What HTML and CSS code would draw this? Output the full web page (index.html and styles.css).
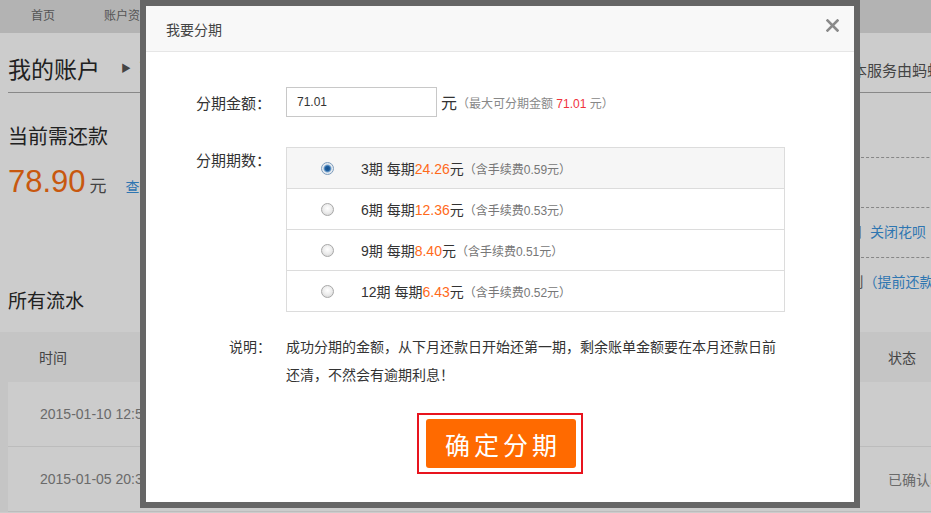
FILE: index.html
```html
<!DOCTYPE html>
<html lang="zh">
<head>
    <meta charset="UTF-8">
    <meta name="viewport" content="width=device-width, initial-scale=1.0">
    <title>我的账户 - 花呗</title>
    <link rel="stylesheet" href="styles.css">
</head>
<body>
    <nav class="top-nav">
        <a href="#">首页</a>
        <a href="#">账户资产</a>
        <a href="#">我的花呗</a>
        <a href="#">交易记录</a>
    </nav>

    <div class="page">
        <div class="crumb-bar">
            <div class="crumb">
                <h2>我的账户</h2>
                <span class="crumb-arrow">▶</span>
                <span class="crumb-sub">花呗</span>
            </div>
            <div class="crumb-note">本服务由蚂蚁微贷提供</div>
        </div>

        <div class="overview">
            <div class="summary">
                <h3>当前需还款</h3>
                <div class="due">
                    <span class="due-num">78.90</span>
                    <span class="due-unit">元</span>
                    <a href="#" class="link">查看账单</a>
                </div>
                <h3 class="records-title">所有流水</h3>
            </div>
            <ul class="side-info">
                <li>花呗额度：2000.00元</li>
                <li>每月10日为还款日</li>
                <li>查看花呗服务合同与小贷公司<a href="#" class="link gap">关闭花呗</a></li>
                <li>每月10日还款，详见还款规则<a href="#" class="link">（提前还款）</a></li>
            </ul>
        </div>

        <div class="records">
            <table>
                <colgroup>
                    <col style="width:260px">
                    <col style="width:320px">
                    <col style="width:150px">
                    <col style="width:142px">
                    <col style="width:160px">
                </colgroup>
                <thead>
                    <tr><th>时间</th><th>名称</th><th>金额</th><th>类型</th><th class="status">状态</th></tr>
                </thead>
                <tbody>
                    <tr><td>2015-01-10 12:56</td><td>花呗还款</td><td>-78.90</td><td>还款</td><td class="status"></td></tr>
                    <tr><td>2015-01-05 20:31</td><td>天猫超市购物</td><td>71.01</td><td>消费</td><td class="status">已确认收货</td></tr>
                </tbody>
            </table>
        </div>
    </div>

    <div class="modal-mask"></div>

    <div class="dialog">
        <div class="dialog-head">
            <span class="dialog-title">我要分期</span>
            <a href="#" class="dialog-close">
                <svg width="13" height="13" viewBox="0 0 13 13">
                    <path d="M1.5 1.5 L11.5 11.5 M11.5 1.5 L1.5 11.5" stroke="#8a8a8a" stroke-width="2.6" stroke-linecap="square"/>
                </svg>
            </a>
        </div>
        <div class="dialog-body">
            <div class="field amount-field">
                <label for="amount">分期金额：</label>
                <div class="field-main">
                    <input type="text" id="amount" value="71.01">
                    <span class="unit">元</span>
                    <span class="hint">（最大可分期金额 <em>71.01</em> 元）</span>
                </div>
            </div>

            <div class="field plans-field">
                <label>分期期数：</label>
                <div class="plans">
                    <label class="plan active"><input type="radio" name="plan" checked><span>3期 每期<b>24.26</b>元<small>（含手续费0.59元）</small></span></label>
                    <label class="plan"><input type="radio" name="plan"><span>6期 每期<b>12.36</b>元<small>（含手续费0.53元）</small></span></label>
                    <label class="plan"><input type="radio" name="plan"><span>9期 每期<b>8.40</b>元<small>（含手续费0.51元）</small></span></label>
                    <label class="plan"><input type="radio" name="plan"><span>12期 每期<b>6.43</b>元<small>（含手续费0.52元）</small></span></label>
                </div>
            </div>

            <div class="field note-field">
                <label>说明：</label>
                <p class="note">成功分期的金额，从下月还款日开始还第一期，剩余账单金额要在本月还款日前还清，不然会有逾期利息！</p>
            </div>

            <div class="submit-row">
                <span class="submit-mark">
                    <button type="button">确定分期</button>
                </span>
            </div>
        </div>
    </div>
</body>
</html>
```

FILE: styles.css
```css
body {
    margin: 0;
    font-family: "Liberation Sans", "Noto Sans CJK SC", sans-serif;
    color: #333;
    background: #fff;
    overflow: hidden;
}

a {
    text-decoration: none;
}

/* 顶部导航 */
.top-nav {
    height: 33px;
    background: #e0e0e0;
    display: flex;
    gap: 49px;
    padding-left: 31px;
}

.top-nav a {
    font-size: 12px;
    line-height: 33px;
    color: #6a6a6a;
}

.page {
    width: 1040px;
}

/* 面包屑 */
.crumb-bar {
    display: grid;
    grid-template-columns: 844px auto;
    height: 60px;
    box-sizing: border-box;
    padding-top: 10px;
    margin-left: 8px;
    border-bottom: 1px solid #aaa;
}

.crumb {
    display: flex;
    align-items: center;
}

.crumb h2 {
    margin: 0;
    font-size: 23px;
    font-weight: normal;
    color: #2a2a2a;
}

.crumb-arrow {
    font-size: 10px;
    color: #555;
    margin: 0 8px 0 21px;
}

.crumb-sub {
    font-size: 21px;
    color: #2a2a2a;
}

.crumb-note {
    margin-top: 16px;
    font-size: 15px;
    color: #555;
    white-space: nowrap;
}

/* 概览 */
.overview {
    display: grid;
    grid-template-columns: 672px 1fr;
    margin-left: 8px;
}

.summary h3 {
    margin: 30px 0 0;
    font-size: 20px;
    line-height: 28px;
    font-weight: normal;
    color: #2a2a2a;
}

.due {
    display: flex;
    align-items: baseline;
    height: 40px;
    margin-top: 11px;
}

.due-num {
    font-size: 31px;
    line-height: 40px;
    color: #fa6e12;
}

.due-unit {
    font-size: 17px;
    color: #555;
    margin-left: 4px;
}

.link {
    color: #3a94de;
}

.due .link {
    font-size: 14px;
    margin-left: 19px;
}

.summary .records-title {
    margin-top: 86px;
    font-size: 19px;
}

.side-info {
    list-style: none;
    margin: 15px 0 0;
    padding: 0;
}

.side-info li {
    height: 49px;
    line-height: 49px;
    font-size: 14px;
    color: #666;
    white-space: nowrap;
}

.side-info li + li {
    border-top: 1px dashed #a8a8a8;
}

.side-info .gap {
    margin-left: 8px;
}

/* 流水表格 */
.records {
    margin-top: 16px;
    padding-left: 8px;
    background: #f7f7f7;
}

.records table {
    width: 1032px;
    border-collapse: collapse;
    table-layout: fixed;
}

.records th {
    height: 50px;
    padding: 0 0 0 31px;
    text-align: left;
    font-size: 14px;
    font-weight: normal;
    color: #555;
}

.records td {
    height: 64px;
    padding: 0 0 0 32px;
    font-size: 14px;
    color: #858585;
    background: #fff;
    border-bottom: 1px solid #ececec;
    white-space: nowrap;
    overflow: hidden;
}

.records .status {
    padding-left: 8px;
}

/* 遮罩 + 弹窗 */
.modal-mask {
    position: fixed;
    top: 0;
    left: 0;
    width: 100%;
    height: 100%;
    background: rgba(0, 0, 0, 0.2);
}

.dialog {
    position: fixed;
    left: 140px;
    top: 0;
    width: 720px;
    height: 508px;
    box-sizing: border-box;
    border: 6px solid #666;
    background: #fff;
}

.dialog-head {
    height: 45px;
    display: flex;
    justify-content: space-between;
    align-items: center;
    padding: 0 15px 0 20px;
    background: #f8f8f8;
    border-bottom: 1px solid #e6e6e6;
}

.dialog-title {
    font-size: 14px;
    color: #444;
}

.dialog-close {
    align-self: flex-start;
    margin-top: 12px;
    height: 13px;
}

.dialog-body {
    padding-top: 35px;
}

.field {
    display: grid;
    grid-template-columns: 125px 1fr;
    column-gap: 15px;
}

.field > label {
    text-align: right;
    font-size: 15px;
    color: #333;
}

.amount-field {
    align-items: center;
}

.field-main {
    display: flex;
    align-items: center;
}

.field-main input {
    width: 151px;
    height: 30px;
    box-sizing: border-box;
    border: 1px solid #c8c8c8;
    padding: 0 10px;
    font: 12px "Liberation Sans", sans-serif;
    color: #333;
    outline: none;
}

.unit {
    margin-left: 4px;
    font-size: 16px;
}

.hint {
    font-size: 12px;
    color: #888;
}

.hint em {
    font-style: normal;
    color: #f0323c;
}

/* 期数选择 */
.plans-field {
    margin-top: 30px;
    align-items: start;
}

.plans-field > label {
    line-height: 28px;
}

.plans {
    width: 497px;
    border: 1px solid #dcdcdc;
}

.plan {
    display: flex;
    align-items: center;
    height: 40px;
    padding-left: 34px;
    font-size: 14px;
    color: #333;
    cursor: pointer;
}

.plan + .plan {
    border-top: 1px solid #dcdcdc;
}

.plan.active {
    background: #f6f6f6;
}

.plan input {
    appearance: none;
    -webkit-appearance: none;
    width: 13px;
    height: 13px;
    margin: 0 27px 0 0;
    border-radius: 50%;
    border: 1px solid #a8a8a8;
    box-sizing: border-box;
    background: radial-gradient(circle at 50% 40%, #fff 0, #ececec 50%, #cfcfcf 100%);
}

.plan input:checked {
    border-color: #7d9cbc;
    background: radial-gradient(circle, #154f8c 0, #1e5f9f 2.2px, #6e9dcb 3.4px, #e3e9ef 4.4px, #f3f3f3 100%);
}

.plan b {
    font-weight: normal;
    color: #ff6a1a;
}

.plan small {
    font-size: 12px;
    color: #777;
}

/* 说明 */
.note-field {
    margin-top: 21px;
    align-items: start;
}

.note-field > label {
    font-size: 14px;
    line-height: 28px;
}

.note {
    margin: 0;
    width: 500px;
    font-size: 14px;
    line-height: 28px;
    color: #333;
}

/* 提交按钮 */
.submit-row {
    display: flex;
    justify-content: center;
    margin-top: 24px;
}

.submit-mark {
    border: 2px solid #e8141e;
    padding: 4px 5px 4px 7px;
}

.submit-mark button {
    display: block;
    width: 150px;
    height: 49px;
    border: none;
    border-radius: 3px;
    background: #ff6a00;
    color: #fff;
    font: 25px "Noto Sans CJK SC", sans-serif;
    letter-spacing: 4px;
    padding: 0 0 0 4px;
    cursor: pointer;
}
```
